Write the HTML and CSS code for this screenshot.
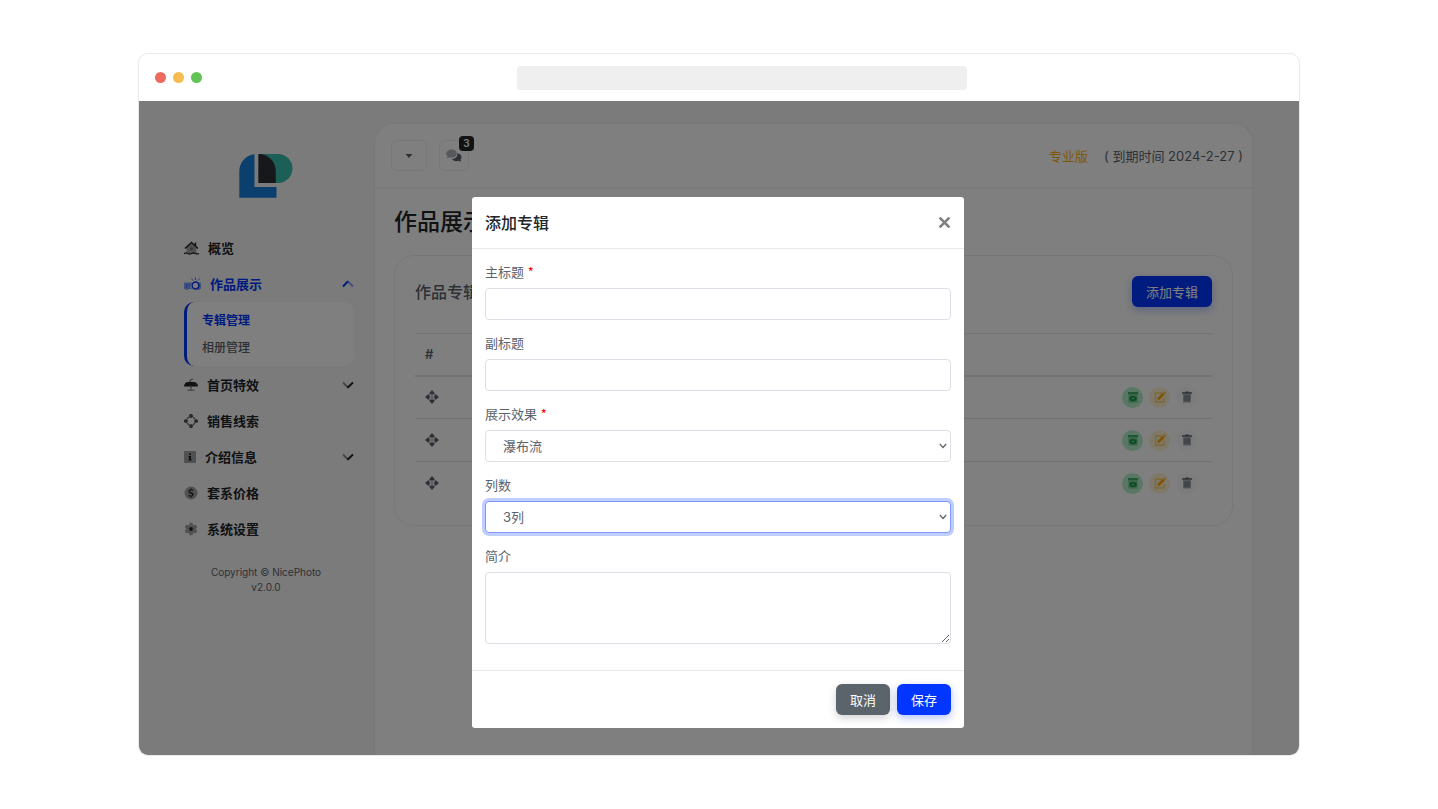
FILE: index.html
```html
<!DOCTYPE html>
<html lang="zh-CN">
<head>
<meta charset="utf-8">
<title>NicePhoto</title>
<link rel="stylesheet" href="styles.css">
</head>
<body>
<svg class="sprite" aria-hidden="true">
  <symbol id="i-move" viewBox="0 0 14 14">
    <path d="M7 0l2.800 3.200-.8 1.400H5l-.8-1.400zM7 14l2.800-3.200-.8-1.400H5l-.8 1.400zM0 7l3.200-2.800 1.400.8v4l-1.400.8zM14 7l-3.200-2.800-1.400.8v4l1.400.8z"/>
    <path d="M6.200 4.600h1.600v4.800H6.200zM4.600 6.200h4.800v1.600H4.600z" opacity=".4"/>
  </symbol>
  <symbol id="i-box" viewBox="0 0 10 12">
    <path d="M0 1h10v2.500H0z" opacity=".75"/>
    <path d="M.5 4h9v7.500h-9z" opacity=".4"/>
    <ellipse cx="5" cy="7.600" rx="3.800" ry="2.700"/>
    <circle cx="5" cy="7.600" r=".8" fill="#b4ecca"/>
  </symbol>
  <symbol id="i-edit" viewBox="0 0 12 12">
    <path d="M8 2H1.500v9H10V7" fill="none" stroke="currentColor" stroke-width="1.300" opacity=".5"/>
    <path d="M3.500 9l.4-2.500L8.600 1.800l2 2L5.900 8.500z"/>
    <path d="M9 1.400l.9-.9a.8.8 0 0 1 1.100 0l.9.900a.8.8 0 0 1 0 1.100l-.9.900z" opacity=".6"/>
  </symbol>
  <symbol id="i-trash" viewBox="0 0 10 12">
    <path d="M0 1.300h3L3.500.500h3l.5.800h3v1.400H0z"/>
    <path d="M1 3h8v8.500H1z" opacity=".5"/>
    <path d="M2.600 4.200h.9v6h-.9zM4.600 4.200h.9v6h-.9zM6.600 4.200h.9v6h-.9z"/>
  </symbol>
  <symbol id="i-caret" viewBox="0 0 8 6">
    <path d="M.800 1l3.200 3.500L7.200 1" fill="none" stroke="currentColor" stroke-width="1.200"/>
  </symbol>
</svg>

<div class="window">
  <div class="titlebar">
    <div class="dots"><span class="dot red"></span><span class="dot amber"></span><span class="dot green"></span></div>
    <div class="address"></div>
  </div>
  <div class="screen">
    <aside class="sidebar">
      <svg class="logo" viewBox="0 0 54 44" aria-hidden="true">
        <path d="M20 0h19a14.500 14.500 0 0 1 0 29H20z" fill="#38bfad"/>
        <path d="M19.300 0c10 0 17.500 7.500 17.500 17.500V29H19.300z" fill="#2e3037"/>
        <path d="M15.500.300V33h22v10.800H.300V17.500C.300 8 7 1.200 15.500.300z" fill="#1680dc"/>
      </svg>
      <nav class="nav">
        <a class="nav-item" href="#">
          <svg width="15" height="14" viewBox="0 0 15 14"><path d="M2.500 6.500l5-4.500 5 4.500V12h-10z" opacity=".4"/><path d="M1 7.500L7.500 1.500 14 7.500M11.500 1.500v3" fill="none" stroke="currentColor" stroke-width="1.500"/><circle cx="7.500" cy="7.800" r="1.600" opacity=".4"/><path d="M0 12.800q1.900-1.600 3.700-.3 1.900 1 3.800 0 1.900-1 3.800 0 1.800.9 3.700 0" fill="none" stroke="currentColor" stroke-width="1.300"/></svg>
          <span>概览</span>
        </a>
        <a class="nav-item active" href="#">
          <svg width="17" height="14" viewBox="0 0 17 14"><path d="M0 5.500h8a5 5 0 0 0 0 6.500H4v1H1.500v-1H0zM14.500 5.500H17v6.500h-1v1h-2.500z" opacity=".45"/><path d="M2 7.500h1v1H2zM4.500 7.500h1v1h-1zM2 9.500h1v1H2z"/><circle cx="11.500" cy="8.500" r="3.400" fill="none" stroke="currentColor" stroke-width="1.500"/><path d="M11.500.500V3M7.500 1.500L9 3.500M15.500 1.500L14 3.500" fill="none" stroke="currentColor" opacity=".65"/></svg>
          <span>作品展示</span>
          <svg class="chev" width="12" height="8" viewBox="0 0 12 8"><path d="M6 1.500l5 5" opacity=".45"/><path d="M1 6.500l5-5.200"/></svg>
        </a>
        <div class="subnav">
          <a class="active" href="#">专辑管理</a>
          <a href="#">相册管理</a>
        </div>
        <a class="nav-item" href="#">
          <svg width="14" height="14" viewBox="0 0 14 14"><path d="M0 8.500Q.300 4 4.500 4h5q4.200 0 4.500 4.500z"/><path d="M5 4Q5 .800 9 .500v1.300Q7 2 7 4zM6.200 8.500h1.600v3h2.700V13h-7v-1.500h2.700z" opacity=".45"/></svg>
          <span>首页特效</span>
          <svg class="chev" width="12" height="8" viewBox="0 0 12 8"><path d="M1 1.500l5 5" opacity=".5"/><path d="M5.500 6.700l5.500-5.200"/></svg>
        </a>
        <a class="nav-item" href="#">
          <svg width="14" height="14" viewBox="0 0 14 14"><g fill="none" stroke="currentColor"><path d="M3 5l2-2M9 3l2 2M11 9l-2 2M5 11L3 9" stroke-width="1.500" opacity=".6"/><g stroke-width="1.300"><circle cx="7" cy="1.900" r="1.200"/><circle cx="7" cy="12.100" r="1.200"/><circle cx="1.900" cy="7" r="1.200"/><circle cx="12.100" cy="7" r="1.200"/></g></g></svg>
          <span>销售线索</span>
        </a>
        <a class="nav-item" href="#">
          <svg width="12" height="14" viewBox="0 0 12 14"><rect y="1" width="12" height="12" rx="1" opacity=".4"/><path d="M5 3.500h2v1.600H5zM4.300 6H7v3.600h.8v1H4.200v-1H5V7h-.7z"/></svg>
          <span>介绍信息</span>
          <svg class="chev" width="12" height="8" viewBox="0 0 12 8"><path d="M1 1.500l5 5" opacity=".5"/><path d="M5.500 6.700l5.500-5.200"/></svg>
        </a>
        <a class="nav-item" href="#">
          <svg width="14" height="14" viewBox="0 0 14 14"><circle cx="7" cy="7" r="6.500" opacity=".4"/><path d="M9 4.800Q8.500 3.900 7 3.900T5 5.400Q5 6.600 7 7t2 1.600Q9 10.100 7 10.100T4.900 9M7 2.500V4M7 10v1.500" fill="none" stroke="currentColor" stroke-width="1.300"/></svg>
          <span>套系价格</span>
        </a>
        <a class="nav-item" href="#">
          <svg width="14" height="14" viewBox="0 0 14 14"><path d="M5.500.800h3l.4 1.900 1.100.6 1.800-.7 1.500 2.600-1.400 1.200v1.200l1.400 1.200-1.500 2.600-1.800-.7-1.100.6-.4 1.900h-3l-.4-1.900-1.100-.6-1.800.7L.700 8.800l1.400-1.200V6.400L.700 5.200l1.500-2.600 1.800.7 1.100-.6z" opacity=".4"/><circle cx="7" cy="7" r="1.900"/></svg>
          <span>系统设置</span>
        </a>
      </nav>
      <p class="copyright">Copyright © NicePhoto<br>v2.0.0</p>
    </aside>

    <main class="panel">
      <header class="topbar">
        <button class="tool wide" type="button" aria-label="菜单"><svg width="8" height="4" viewBox="0 0 8 4"><path d="M.500 0h7L4 4z"/></svg></button>
        <button class="tool" type="button" aria-label="消息">
          <svg width="16" height="14" viewBox="0 0 16 14"><path d="M11.300 4.300c2.500.3 4.200 1.900 4.200 3.900 0 1.100-.4 1.900-1.100 2.600.2.700.7 1.300 1.200 1.800-1.200.1-2.200-.2-3-.8-2.800.9-5.800 0-6.800-2 3.500.2 6-1.900 5.500-5.500z"/><path d="M5.600.500c3 0 5.200 1.800 5.200 4.100S8.600 8.700 5.600 8.700c-.8 0-1.500-.1-2.200-.4-.8.600-1.800 1-3 .9.600-.5 1-1.100 1.200-1.800C.800 6.700.300 5.700.300 4.600.300 2.300 2.600.500 5.600.500z" opacity=".5"/></svg>
          <span class="badge">3</span>
        </button>
        <span class="plan">专业版</span>
        <span class="expiry">( 到期时间 2024-2-27 )</span>
      </header>
      <div class="content">
        <h1>作品展示</h1>
        <section class="card">
          <div class="card-head">
            <h2>作品专辑</h2>
            <button class="btn primary" type="button">添加专辑</button>
          </div>
          <table>
            <thead><tr><th>#</th><th></th></tr></thead>
            <tbody>
              <tr><td><svg class="move"><use href="#i-move"/></svg></td><td><div class="actions"><button class="act view" type="button" aria-label="查看"><svg width="10" height="12"><use href="#i-box"/></svg></button><button class="act edit" type="button" aria-label="编辑"><svg width="12" height="12"><use href="#i-edit"/></svg></button><button class="act del" type="button" aria-label="删除"><svg width="10" height="12"><use href="#i-trash"/></svg></button></div></td></tr>
              <tr><td><svg class="move"><use href="#i-move"/></svg></td><td><div class="actions"><button class="act view" type="button" aria-label="查看"><svg width="10" height="12"><use href="#i-box"/></svg></button><button class="act edit" type="button" aria-label="编辑"><svg width="12" height="12"><use href="#i-edit"/></svg></button><button class="act del" type="button" aria-label="删除"><svg width="10" height="12"><use href="#i-trash"/></svg></button></div></td></tr>
              <tr><td><svg class="move"><use href="#i-move"/></svg></td><td><div class="actions"><button class="act view" type="button" aria-label="查看"><svg width="10" height="12"><use href="#i-box"/></svg></button><button class="act edit" type="button" aria-label="编辑"><svg width="12" height="12"><use href="#i-edit"/></svg></button><button class="act del" type="button" aria-label="删除"><svg width="10" height="12"><use href="#i-trash"/></svg></button></div></td></tr>
            </tbody>
          </table>
        </section>
      </div>
    </main>

    <div class="backdrop">
      <form class="modal" role="dialog" aria-labelledby="dlg-title">
        <header class="modal-head">
          <h3 id="dlg-title">添加专辑</h3>
          <button class="close" type="button" aria-label="关闭"><svg width="13" height="13" viewBox="0 0 12 12"><path d="M1.500 1.500l9 9M10.500 1.500l-9 9"/></svg></button>
        </header>
        <div class="modal-body">
          <div class="field"><label for="title">主标题 <span class="req">*</span></label><input id="title" type="text"></div>
          <div class="field"><label for="subtitle">副标题</label><input id="subtitle" type="text"></div>
          <div class="field"><label for="effect">展示效果 <span class="req">*</span></label><div class="select"><select id="effect"><option>瀑布流</option></select><svg class="caret"><use href="#i-caret"/></svg></div></div>
          <div class="field"><label for="cols">列数</label><div class="select"><select id="cols" class="focused"><option>3列</option></select><svg class="caret"><use href="#i-caret"/></svg></div></div>
          <div class="field"><label for="intro">简介</label><textarea id="intro"></textarea></div>
        </div>
        <footer class="modal-foot">
          <button class="btn secondary" type="button">取消</button>
          <button class="btn primary" type="submit">保存</button>
        </footer>
      </form>
    </div>
  </div>
</div>
</body>
</html>
```

FILE: styles.css
```css
* { box-sizing: border-box; }

body {
  margin: 0;
  min-height: 100vh;
  display: flex;
  padding: 53px 138px;
  background: #fff;
  color: #5b636d;
  font: 13px/20px Inter, "Noto Sans CJK SC", sans-serif;
}

h1, h2, h3, p { margin: 0; }
a { color: inherit; text-decoration: none; }
button, input, select, textarea { font: inherit; color: inherit; margin: 0; }
button { cursor: pointer; padding: 0; border: 0; }
svg { display: block; fill: currentColor; flex: none; }
.sprite { position: absolute; width: 0; height: 0; }

.window {
  flex: 1;
  display: flex;
  flex-direction: column;
  border: 1px solid #e9e9e9;
  border-radius: 10px;
  overflow: hidden;
}

.titlebar {
  display: grid;
  grid-template-columns: 32.6% 1fr 28.6%;
  align-items: center;
  height: 47px;
}
.dots { display: flex; gap: 7px; padding-left: 16px; }
.dot { width: 11px; height: 11px; border-radius: 50%; }
.red { background: #ed6a5f; }
.amber { background: #f5bd4f; }
.green { background: #61c454; }
.address { height: 24px; border-radius: 4px; background: #efefef; }

.screen {
  position: relative;
  flex: 1;
  display: flex;
  padding: 22px 46px 0 0;
  background: #f7f7f7;
}

.sidebar { width: 235px; padding: 31px 20px 0 39px; color: #212529; }
.logo { width: 54px; height: 44px; margin: 0 auto 32px; }
.nav { padding-left: 6px; font-weight: 600; }
.nav-item { display: flex; align-items: center; gap: 9px; height: 36px; }
.active { color: #0036ff; }
.chev { margin-left: auto; fill: none; stroke: currentColor; stroke-width: 2; }
.subnav {
  display: flex;
  flex-direction: column;
  gap: 7px;
  margin-bottom: 1px;
  padding: 9px 15px 8px;
  border-left: 3px solid #0036ff;
  border-radius: 10px;
  background: #fff;
  font-size: 12px;
  font-weight: 500;
  color: #5b636d;
}
.subnav .active { color: #0036ff; font-weight: 600; }
.copyright { padding-top: 18px; font-size: 10px; line-height: 15px; text-align: center; color: #5b636d; }

.panel {
  flex: 1;
  border: 1px solid #efefef;
  border-bottom: 0;
  border-radius: 20px 20px 0 0;
  background: #fff;
}
.topbar {
  display: flex;
  align-items: center;
  height: 65px;
  padding: 0 9px 0 16px;
  border-bottom: 2px solid #f4f4f4;
}
.tool {
  position: relative;
  display: grid;
  place-items: center;
  width: 30px;
  height: 31px;
  border: 1px solid #efefef;
  border-radius: 6px;
  background: #fff;
}
.tool.wide { width: 36px; margin-right: 12px; }
.badge {
  position: absolute;
  top: -5px;
  right: -6px;
  width: 15px;
  border-radius: 4px;
  background: #212529;
  color: #fff;
  font-size: 10px;
  font-weight: 600;
  line-height: 15px;
}
.plan { margin-left: auto; margin-right: 16px; color: #ffb01f; }

.content { padding: 17px 19px; }
h1 { font-size: 23px; font-weight: 500; line-height: 32px; color: #212529; }
.card { margin-top: 17px; padding: 20px; border: 1px solid #efefef; border-radius: 20px; }
.card-head { display: flex; align-items: center; justify-content: space-between; margin-bottom: 26px; }
h2 { font-size: 16px; font-weight: 500; }

.btn { height: 31px; padding: 0 14px; border-radius: 6px; color: #fff; }
.primary { background: #0036ff; box-shadow: 0 3px 8px rgba(0, 54, 255, .3); }
.secondary { background: #5b636b; box-shadow: 0 3px 8px rgba(0, 0, 0, .18); }

table { width: 100%; border-collapse: collapse; text-align: left; }
th { height: 42px; padding: 0 10px; border-top: 1px solid #e9e9e9; border-bottom: 2px solid #e4e4e4; font-weight: 600; }
td { height: 43px; padding: 0 15px 0 10px; }
tbody tr + tr td { border-top: 1px solid #e4e4e4; }
.move { width: 14px; height: 14px; }
.actions { display: flex; justify-content: flex-end; gap: 6px; }
.act { display: grid; place-items: center; width: 21px; height: 21px; border-radius: 50%; }
.view { background: #b4ecca; color: #189b4c; }
.edit { background: #fff2d5; color: #ffa800; }
.del { background: #f9f9f9; color: #5b636d; }

.backdrop {
  position: absolute;
  inset: 0;
  display: flex;
  justify-content: center;
  align-items: flex-start;
  padding: 96px 2px 0 0;
  background: rgba(0, 0, 0, .5);
}
.modal { width: 492px; border-radius: 3px; background: #fff; }
.modal-head {
  display: flex;
  align-items: center;
  justify-content: space-between;
  height: 52px;
  padding: 0 13px;
  border-bottom: 1px solid #e9e9e9;
}
h3 { font-size: 16px; font-weight: 500; color: #212529; }
.close { background: none; color: #7f7f7f; }
.close svg { stroke: currentColor; stroke-width: 2.4; }
.modal-body { display: grid; gap: 13px; padding: 13px 13px 26px; }
.field { display: grid; gap: 6px; }
.req { color: #f00; font-family: "Noto Sans CJK SC", sans-serif; }
input, select, textarea {
  display: block;
  width: 100%;
  height: 32px;
  border: 1px solid #dcdfe6;
  border-radius: 4px;
  background: #fff;
}
input, textarea { padding: 0 12px; }
.select { position: relative; }
select { appearance: none; padding: 0 17px; }
.caret {
  position: absolute;
  top: 13px;
  right: 4px;
  width: 8px;
  height: 6px;
  pointer-events: none;
}
textarea { height: 72px; resize: vertical; }
.focused { border-color: #7f9aff; box-shadow: 0 0 0 3px rgba(0, 54, 255, .25); outline: 0; }
.modal-foot {
  display: flex;
  justify-content: flex-end;
  gap: 7px;
  padding: 13px;
  border-top: 1px solid #e9e9e9;
}
```
